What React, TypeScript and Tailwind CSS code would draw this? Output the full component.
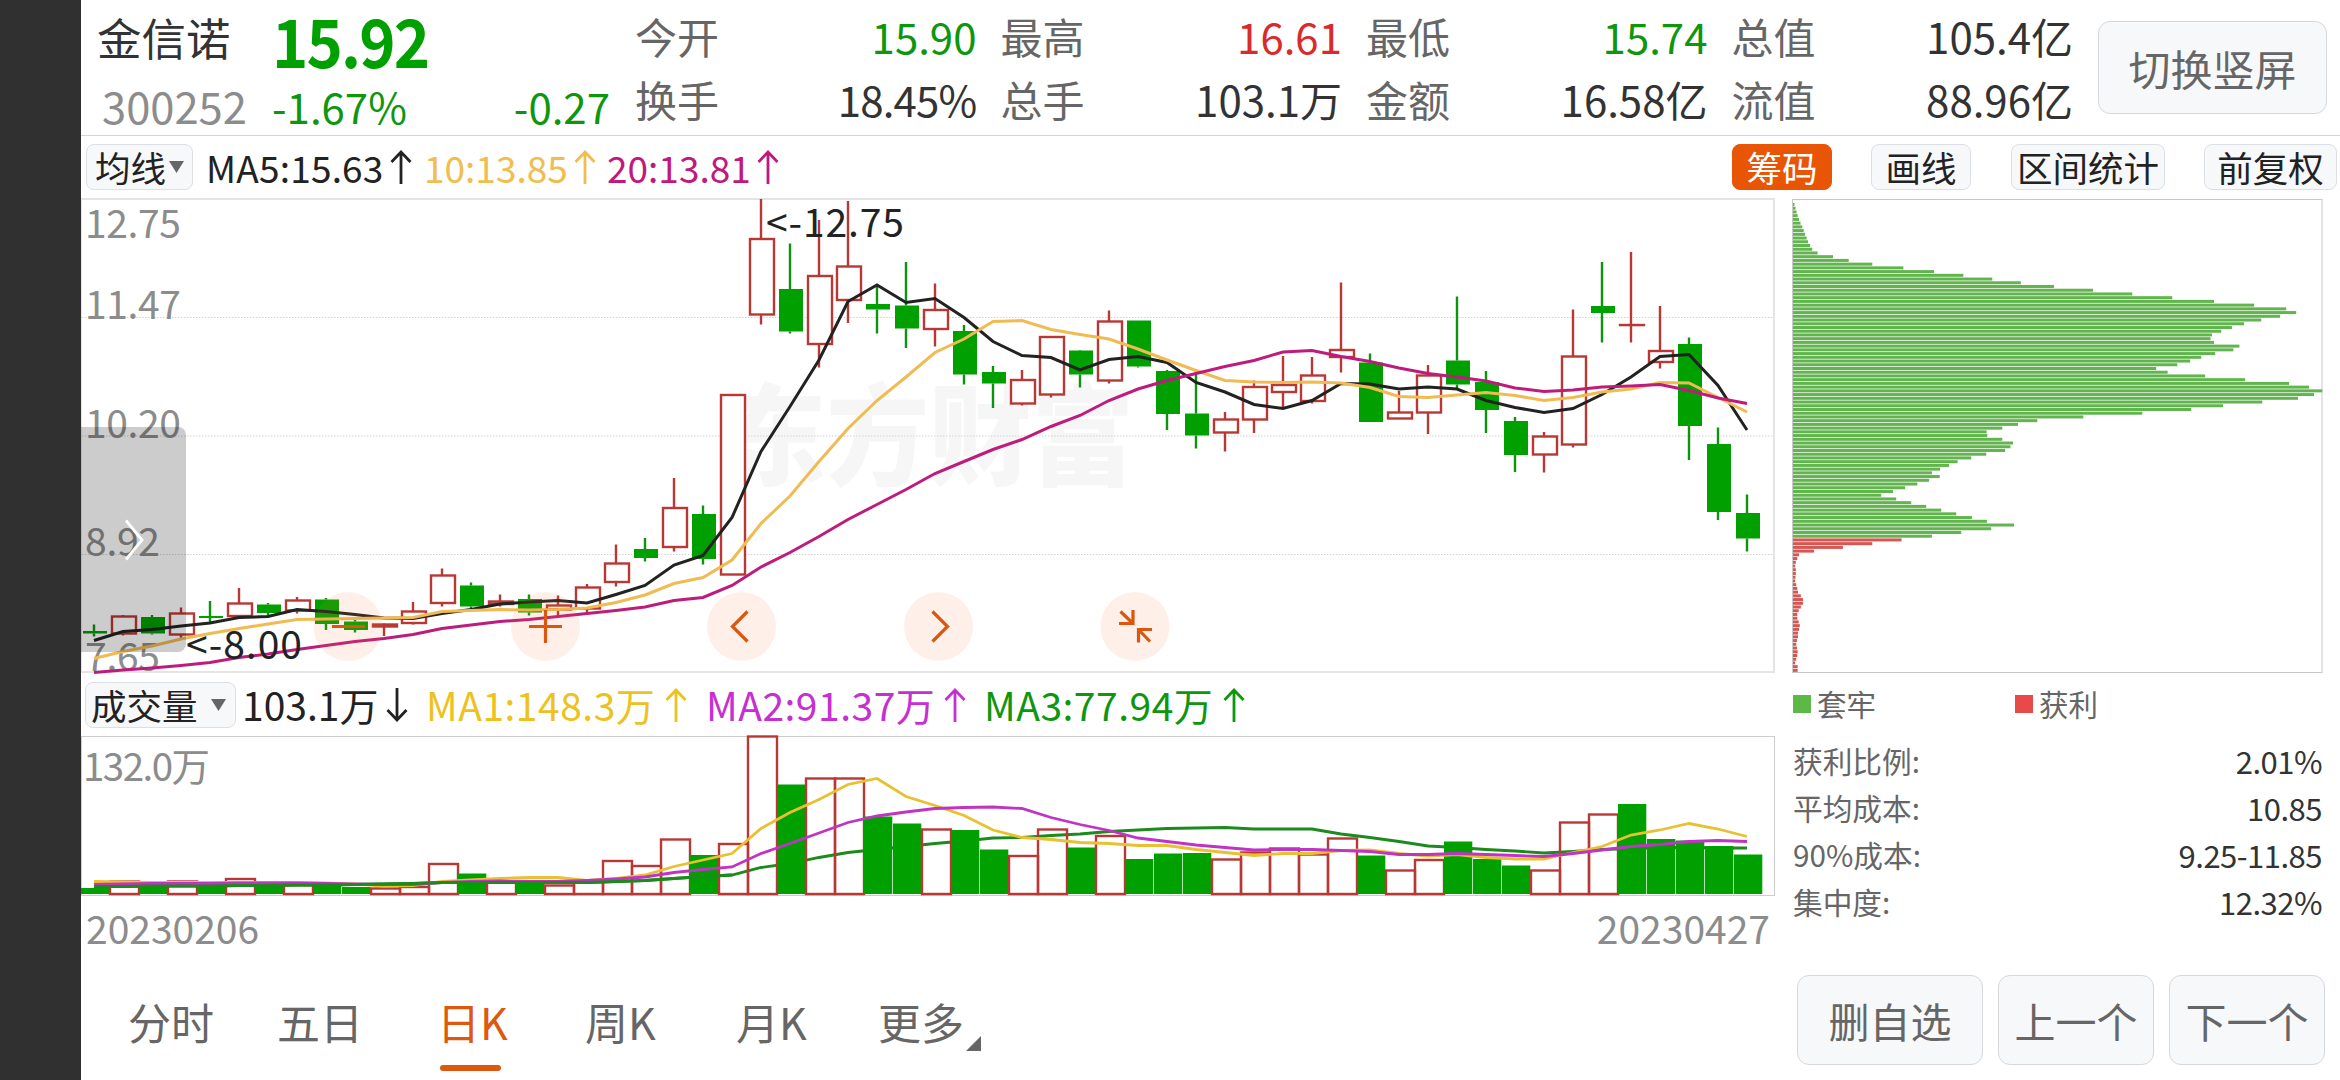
import type { ReactNode } from "react";
import clsx from "clsx";

const RED = "#b83835";
const GREEN = "#00a000";

/** [direction, high, body top, body bottom, low, volume top] */
type Candle = ["r" | "g", number, number, number, number, number];

const candles: Candle[] = [
  ["g", 624.5, 631, 633.5, 636.5, 888],
  ["r", 615, 616.5, 633.5, 635.5, 881.5],
  ["g", 615, 617, 633.5, 634.5, 885.5],
  ["r", 607.5, 613.5, 634.5, 638, 881.5],
  ["g", 601, 616, 618, 622.5, 886],
  ["r", 588, 603.5, 616, 617, 879],
  ["g", 603, 604.5, 613, 615.5, 884.5],
  ["r", 597, 600.5, 610.5, 613.5, 885],
  ["g", 598, 599.5, 624, 630, 885],
  ["g", 620, 621.5, 630, 632.5, 887],
  ["r", 623.5, 624.5, 626.5, 636, 888.5],
  ["r", 602, 611.5, 623, 624.5, 887],
  ["r", 568.5, 575.5, 603, 606.5, 864],
  ["g", 582.5, 585.5, 606.5, 609.5, 873.5],
  ["r", 594.5, 601.5, 604, 606.5, 882.5],
  ["g", 594.5, 599, 612.5, 615.5, 884],
  ["r", 595.5, 605.5, 609.5, 615.5, 885.5],
  ["r", 584, 587.5, 608.5, 612.5, 881],
  ["r", 544.5, 563.5, 582, 586.5, 861],
  ["g", 538, 549, 558, 561.5, 866],
  ["r", 478, 508, 547, 551.5, 839.5],
  ["g", 505.5, 514, 559, 564.5, 855],
  ["r", 395, 395, 574.5, 574.5, 844],
  ["r", 199, 239, 314.5, 324.5, 736.5],
  ["g", 243.5, 289, 331.5, 333.5, 784.5],
  ["r", 220, 276, 344, 367.5, 778.5],
  ["r", 201, 266.5, 300, 323, 778.5],
  ["g", 285, 304, 309.5, 333.5, 816.5],
  ["g", 262, 305.5, 328.5, 348, 823.5],
  ["r", 283.5, 310, 329, 346.5, 829.5],
  ["g", 325, 331, 374.5, 384.5, 830],
  ["g", 366, 372, 383.5, 408, 849.5],
  ["r", 370, 380, 403.5, 405.5, 856],
  ["r", 336, 337, 394.5, 397.5, 829.5],
  ["g", 350, 350.5, 374.5, 387.5, 847.5],
  ["r", 310.5, 321.5, 380.5, 383.5, 836],
  ["g", 320.5, 320.5, 366.5, 367.5, 859],
  ["g", 370, 371, 414, 430, 853.5],
  ["g", 371.5, 413.5, 435.5, 448.5, 853],
  ["r", 412, 419.5, 432.5, 451.5, 859.5],
  ["r", 380.5, 387, 419.5, 433, 852.5],
  ["r", 356, 385, 392, 408.5, 848.5],
  ["r", 357, 375.5, 401, 403.5, 854.5],
  ["r", 282.5, 350, 357, 372.5, 838.5],
  ["g", 353.5, 362.5, 422, 422, 855.5],
  ["r", 391, 412.5, 418.5, 418.5, 870.5],
  ["r", 365, 375.5, 412.5, 434, 860],
  ["g", 296.5, 360.5, 384.5, 388.5, 841.5],
  ["g", 371, 382, 410, 433, 859],
  ["g", 417, 421, 455, 472, 865.5],
  ["r", 432, 436.5, 454.5, 472.5, 870.5],
  ["r", 309.5, 356.5, 444.5, 447.5, 822.5],
  ["g", 262, 306, 313, 342.5, 814.5],
  ["r", 252, 325, 325, 342.5, 804],
  ["r", 306, 351, 362, 368.5, 839],
  ["g", 337.5, 344, 426, 460, 840.5],
  ["g", 427.5, 444, 512, 520, 846],
  ["g", 494.5, 513, 538.5, 551.5, 854.5],
];

// volume bars whose colour differs from the candle above them
const volumeColor: Record<number, "r" | "g"> = { 19: "r", 52: "r", 53: "g", 54: "g" };

const ma5 = [
  640.5, 631.5, 629.5, 626, 623, 617.5, 616.5, 609.5, 611.5, 614.5, 618, 618.5, 613.5, 609.5, 604,
  602, 600.5, 603, 594.5, 585.5, 565, 555.5, 517.5, 451.5, 406.5, 360, 301.5, 285, 302.5, 298.5,
  317.5, 341.5, 355.5, 357.5, 370, 359.5, 356.5, 362.5, 382.5, 392, 404.5, 408.5, 400.5, 383.5,
  384, 389, 387, 389, 400.5, 407.5, 412.5, 408.5, 394.5, 377, 356.5, 354.5, 385.5, 430,
];
const ma10 = [
  658.5, 651.5, 646, 639, 633.5, 628.5, 624, 619.5, 619, 618.5, 618, 617.5, 611.5, 610.5, 609.5,
  610, 609.5, 608, 602.5, 595, 583.5, 577.5, 560, 523.5, 496, 461.5, 428.5, 400.5, 377, 352.5, 339,
  321.5, 320.5, 329.5, 334.5, 339, 349, 360, 370.5, 380.5, 382, 382.5, 382, 383, 387.5, 396.5,
  397.5, 395, 392.5, 395.5, 400.5, 397.5, 392, 389, 382.5, 383, 397.5, 412,
];
const ma20 = [
  672.5, 670, 668, 665.5, 662.5, 657.5, 654, 649.5, 645.5, 641.5, 638.5, 634.5, 628.5, 625, 621.5,
  619.5, 616.5, 613.5, 610.5, 607, 600.5, 597.5, 585.5, 567, 552.5, 536.5, 519.5, 504.5, 489.5,
  473.5, 461.5, 449.5, 439.5, 426.5, 415.5, 400.5, 389, 380.5, 373.5, 366.5, 360.5, 352, 350.5,
  356.5, 361.5, 368, 373.5, 377, 381, 388, 391.5, 390, 387, 386, 384.5, 390.5, 398, 403.5,
];
const vol1 = [
  881.5, 882, 882.5, 882.5, 882.5, 882.5, 882.5, 882.5, 883, 884, 886, 885.5, 881.5, 880, 878.5,
  877.5, 877.5, 880.5, 878.5, 875, 866.5, 860, 853.5, 828.5, 812.5, 799.5, 784.5, 778.5, 796.5,
  805.5, 815.5, 830, 837.5, 839.5, 842.5, 843.5, 845.5, 845.5, 849.5, 852.5, 855.5, 853.5, 853.5,
  850.5, 850, 853.5, 856, 854.5, 857.5, 859, 859, 852.5, 846.5, 835, 830, 823.5, 829, 836.5,
];
const vol2 = [
  884.5, 884, 883.5, 883.5, 883.5, 883, 883, 883, 883.5, 884, 884.5, 884.5, 882.5, 881.5, 881,
  881.5, 881.5, 880.5, 879, 877, 872.5, 869.5, 867, 853.5, 843.5, 833, 822.5, 816, 812, 808.5,
  807.5, 807, 808.5, 817.5, 824.5, 830.5, 838, 841.5, 845, 847.5, 850, 849.5, 849.5, 850.5, 851.5,
  854.5, 854.5, 853.5, 854.5, 855.5, 856.5, 853.5, 850, 846.5, 844.5, 841.5, 840.5, 841.5,
];
const vol3 = [
  886.5, 886.5, 886, 886, 886, 885.5, 885.5, 885, 885, 884.5, 884, 883.5, 882.5, 882.5, 882.5,
  882.5, 882.5, 882.5, 881.5, 880.5, 878.5, 876.5, 875, 867.5, 863.5, 857.5, 852.5, 849.5, 846.5,
  843.5, 841, 838, 837.5, 835.5, 834, 831.5, 830, 828.5, 828, 827.5, 829, 829, 829, 834, 837.5,
  841.5, 846, 847.5, 849.5, 851, 853, 851.5, 849.5, 848.5, 847.5, 847.5, 848, 848,
];

// cost distribution, one width per price level from high to low
const chips = [
  4, 7, 10, 13, 17, 21, 26, 30, 34, 38, 42, 48, 54, 69, 112, 156, 222, 309, 395, 477, 558, 638, 731,
  840, 950, 1062, 1179, 1291, 1381, 1409, 1364, 1311, 1263, 1229, 1199, 1173, 1169, 1179, 1250,
  1233, 1182, 1143, 1112, 1076, 1017, 1049, 1154, 1266, 1389, 1445, 1482, 1459, 1414, 1314, 1204,
  1115, 978, 813, 684, 630, 586, 542, 544, 586, 616, 609, 594, 541, 499, 461, 437, 412, 389, 411,
  381, 348, 314, 280, 247, 289, 331, 373, 415, 457, 501, 543, 619, 555, 471, 389, 304, 222, 140,
  59, 17, 12, 8, 6, 8, 8, 7, 6, 9, 12, 14, 22, 28, 28, 22, 16, 12, 12, 16, 19, 17, 14, 14, 11, 9,
  11, 13, 12, 9, 6, 13, 13,
];
const PROFIT_FROM = 90;

const xAt = (i: number) => 94 + 29 * i;
const toPoints = (ys: number[]) => ys.map((y, i) => `${xAt(i)},${y}`).join(" ");

function Line({ ys, color, width = 3 }: { ys: number[]; color: string; width?: number }) {
  return <polyline points={toPoints(ys)} fill="none" stroke={color} strokeWidth={width} />;
}

function Arrow({ down }: { down?: boolean }) {
  return (
    <svg
      viewBox="0 0 22 34"
      className={clsx("h-[34px] w-[22px] shrink-0", down && "rotate-180")}
      fill="none"
      stroke="currentColor"
      strokeWidth="2.8"
    >
      <path d="M11 34V2M1.5 12L11 2L20.5 12" />
    </svg>
  );
}

function Caret() {
  return (
    <svg viewBox="0 0 15 12" className="h-3 w-[15px] shrink-0" fill="#666">
      <path d="M0 0H15L7.5 12Z" />
    </svg>
  );
}

const stats = [
  [
    { label: "今开", value: "15.90", tone: "text-[#0f960f]" },
    { label: "换手", value: "18.45%", tone: "tracking-[-0.8px] text-[#333]" },
  ],
  [
    { label: "最高", value: "16.61", tone: "text-[#d92b2b]" },
    { label: "总手", value: "103.1万", tone: "text-[#333]" },
  ],
  [
    { label: "最低", value: "15.74", tone: "text-[#0f960f]" },
    { label: "金额", value: "16.58亿", tone: "text-[#333]" },
  ],
  [
    { label: "总值", value: "105.4亿", tone: "text-[#333]" },
    { label: "流值", value: "88.96亿", tone: "text-[#333]" },
  ],
];

function Header() {
  return (
    <header className="flex h-[136px] border-b border-[#d5d5d5]">
      <div className="w-[191px] pt-[15px] pl-4 leading-none">
        <div className="text-[44.5px] text-[#333]">金信诺</div>
        <div className="mt-[24px] pl-[5px] text-[43.5px] text-[#8c8c8c]">300252</div>
      </div>
      <div className="w-[338px] text-[#0f960f]">
        <div className="h-[84px] w-[170px] origin-left scale-x-[0.92] text-[67px] leading-[78px] font-bold tracking-[-2px] text-[#00a000]">
          15.92
        </div>
        <div className="flex justify-between text-[42px] leading-[44px]">
          <span>-1.67%</span>
          <span>-0.27</span>
        </div>
      </div>
      <div className="flex gap-[24px] pt-[15px] pl-[25px]">
        {stats.map((col) => (
          <div key={col[0].label} className="flex w-[341.5px] flex-col gap-[21px] leading-none">
            {col.map((s) => (
              <div key={s.label} className="flex justify-between text-[42px]">
                <span className="text-[#666]">{s.label}</span>
                <span className={s.tone}>{s.value}</span>
              </div>
            ))}
          </div>
        ))}
      </div>
      <button className="mt-[21px] ml-[25px] h-[93px] w-[229px] rounded-xl border border-[#d5d8dc] bg-[#f7f8fa] text-[42px] leading-none text-[#666]">
        切换竖屏
      </button>
    </header>
  );
}

function Tool({ children, className }: { children: ReactNode; className?: string }) {
  return (
    <button
      className={clsx(
        "h-[46px] shrink-0 rounded-lg border text-[35.5px] leading-none",
        className ?? "border-[#dcdfe3] bg-[#f7f8fa] text-[#222]",
      )}
    >
      {children}
    </button>
  );
}

function AverageBar() {
  return (
    <div className="flex h-[62px] items-center pl-[5px] text-[37px] leading-none">
      <div className="flex h-[46px] w-[107px] items-center gap-[3px] rounded-lg border border-[#dcdfe3] bg-[#f7f8fa] pl-2 text-[35.5px] text-[#222]">
        均线
        <Caret />
      </div>
      <div className="flex w-[219px] items-center justify-between pl-[13px] tracking-[0.2px] text-[#222]">
        MA5:15.63 <Arrow />
      </div>
      <div className="flex w-[184px] items-center justify-between pl-[12px] text-[#f0bd50]">
        10:13.85 <Arrow />
      </div>
      <div className="flex w-[183px] items-center justify-between pl-[11px] text-[#c0187c]">
        20:13.81 <Arrow />
      </div>
      <div className="ml-auto flex pr-[3px]">
        <Tool className="mr-[39px] w-[100px] border-[#e85505] bg-[#e85505] text-white">筹码</Tool>
        <div className="mr-10 flex w-[100px] flex-col">
          <Tool>画线</Tool>
        </div>
        <div className="mr-[39px] flex w-[154px] flex-col">
          <Tool>区间统计</Tool>
        </div>
        <div className="flex w-[133px] flex-col">
          <Tool>前复权</Tool>
        </div>
      </div>
    </div>
  );
}

function RoundButton({ cx, children }: { cx: number; children: ReactNode }) {
  return (
    <g transform={`translate(${cx} 626.5)`} fill="none" stroke="#d9570f" strokeWidth="3.2">
      <circle r="34.5" fill="#f5762a" fillOpacity="0.11" stroke="none" />
      {children}
    </g>
  );
}

const axis = [
  { y: 238, label: "12.75", w: 96 },
  { y: 319, label: "11.47", w: 96 },
  { y: 437.5, label: "10.20", w: 96 },
  { y: 556, label: "8.92", w: 75 },
  { y: 670.5, label: "7.65", w: 75 },
];

function PriceChart() {
  return (
    <svg viewBox="81 198 1695 476" className="h-[476px] w-[1695px]">
      <text
        x="724"
        y="477"
        fontSize="110"
        fontWeight="900"
        fill="#f6f6f6"
        textLength="410"
        lengthAdjust="spacingAndGlyphs"
      >
        东方财富
      </text>
      <rect x="81" y="199" width="1693" height="473" fill="none" stroke="#e4e4e4" strokeWidth="2" />
      {[317.5, 436, 554.5].map((y) => (
        <line key={y} x1="82" x2="1774" y1={y} y2={y} stroke="#d2d2d2" strokeDasharray="1.5 1.5" />
      ))}
      {axis.map((a) => (
        <text key={a.label} x="85" y={a.y} fontSize="39" fill="#8c8c8c" textLength={a.w}>
          {a.label}
        </text>
      ))}
      {candles.map(([dir, high, top, bottom, low], i) => {
        const x = xAt(i);
        const color = dir === "r" ? RED : "#0d930d";
        return (
          <g key={i} stroke={color} strokeWidth="2.4">
            <path d={`M${x} ${high}V${top}M${x} ${bottom}V${low}`} />
            {dir === "r" ? (
              <rect x={x - 11} y={top} width="24" height={Math.max(bottom - top, 0.1)} fill="#fff" />
            ) : (
              <rect x={x - 11} y={top} width="24" height={bottom - top} fill={GREEN} stroke="none" />
            )}
          </g>
        );
      })}
      <Line ys={ma5} color="#222" />
      <Line ys={ma10} color="#efbb52" />
      <Line ys={ma20} color="#bd1c7c" />
      <g fontSize="39" fill="#222">
        <text x="766" y="236.5" textLength="138">
          &lt;-12.75
        </text>
        <text x="186" y="659" textLength="116">
          &lt;-8.00
        </text>
      </g>
      <RoundButton cx={348}>
        <path d="M-16 0H17" />
      </RoundButton>
      <RoundButton cx={545.5}>
        <path d="M-16.5 0H16.5M0-16.5V16.5" />
      </RoundButton>
      <RoundButton cx={741.5}>
        <path d="M6-15L-9 0L6 15" />
      </RoundButton>
      <RoundButton cx={938.5}>
        <path d="M-6-15L9 0L-6 15" />
      </RoundButton>
      <RoundButton cx={1135}>
        <path d="M-14.5-15L-2-3M-2-16.5V-3H-16M15 15L3.5 3M3.5 16V3H17" />
      </RoundButton>
      <path d="M81 427H178a8 8 0 0 1 8 8V644a8 8 0 0 1-8 8H81Z" fill="#000" fillOpacity="0.2" />
      <path d="M126 520.5L142 540L126 559.5" fill="none" stroke="#fff" strokeWidth="2.8" />
    </svg>
  );
}

function VolumeBar() {
  return (
    <div className="flex h-[61px] items-center pl-[4px] text-[39px] leading-none">
      <div className="flex h-[46px] w-[151px] items-center gap-[13px] rounded-lg border border-[#dcdfe3] bg-[#f7f8fa] pl-[5px] text-[35.5px] text-[#222]">
        成交量
        <Caret />
      </div>
      <div className="flex w-[172px] items-center justify-between pl-1.5 text-[#222]">
        103.1万 <Arrow down />
      </div>
      <div className="flex w-[279px] items-center justify-between pl-[18px] tracking-[0.5px] text-[#ecc21f]">
        MA1:148.3万 <Arrow />
      </div>
      <div className="flex w-[279px] items-center justify-between pl-[19px] tracking-[0.5px] text-[#c62fd0]">
        MA2:91.37万 <Arrow />
      </div>
      <div className="flex w-[279px] items-center justify-between pl-[18px] tracking-[0.5px] text-[#0f960f]">
        MA3:77.94万 <Arrow />
      </div>
    </div>
  );
}

function VolumeChart() {
  return (
    <svg viewBox="81 735 1695 162" className="h-[162px] w-[1695px]">
      <rect x="81.5" y="736.5" width="1693" height="159" fill="none" stroke="#ccc" />
      <text x="83" y="781" fontSize="38.5" fill="#8c8c8c" textLength="127">
        132.0万
      </text>
      <Line ys={vol3} color="#1c8a1c" width={2.8} />
      {candles.map((c, i) => {
        const dir = volumeColor[i] ?? c[0];
        const top = c[5];
        return dir === "r" ? (
          <rect
            key={i}
            x={xAt(i) - 13}
            y={top}
            width="29"
            height={894 - top}
            fill="none"
            stroke={RED}
            strokeWidth="2.4"
          />
        ) : (
          <rect key={i} x={xAt(i) - 13} y={top} width="28.3" height={894 - top} fill={GREEN} />
        );
      })}
      <Line ys={vol1} color="#e8c030" width={2.8} />
      <Line ys={vol2} color="#c034c4" width={2.8} />
      <Line ys={vol3.slice(0, 23)} color="#1c8a1c" width={2.8} />
    </svg>
  );
}

function ChipChart() {
  return (
    <svg viewBox="1791 198 533 476" className="h-[476px] w-[533px]">
      <rect x="1792.5" y="199.5" width="529.5" height="473" fill="none" stroke="#c9c9c9" />
      {chips.map((w, i) => (
        <rect
          key={i}
          x="1793"
          y={203 + i * 3.727}
          width={w / 2.8}
          height="3"
          fill={i < PROFIT_FROM ? "#62b44e" : "#d85552"}
        />
      ))}
    </svg>
  );
}

const costRows = [
  ["获利比例:", "2.01%"],
  ["平均成本:", "10.85"],
  ["90%成本:", "9.25-11.85"],
  ["集中度:", "12.32%"],
];

function ChipPanel() {
  return (
    <div className="ml-[15px] w-[533px]">
      <ChipChart />
      <div className="flex h-[60px] items-center pl-0.5 text-[29.5px] leading-none text-[#666]">
        <i className="mr-1.5 size-[18px] bg-[#5db947]" />
        <span className="w-[198px]">套牢</span>
        <i className="mr-1.5 size-[18px] bg-[#e84a4a]" />
        <span>获利</span>
      </div>
      <dl className="pt-[3px] pr-0.5 pl-0.5 leading-none">
        {costRows.map(([label, value]) => (
          <div key={label} className="flex h-[47px] items-center justify-between">
            <dt className="text-[29.7px] text-[#666]">{label}</dt>
            <dd className="text-[31px] tracking-[-0.5px] text-[#333]">{value}</dd>
          </div>
        ))}
      </dl>
    </div>
  );
}

const tabs = [
  { label: "分时", width: "w-[149px]" },
  { label: "五日", width: "w-[160px]" },
  { label: "日K", width: "w-[148px]", active: true },
  { label: "周K", width: "w-[151px]" },
  { label: "月K", width: "w-[142px]" },
  { label: "更多", width: "w-[88px]" },
];

function Footer() {
  return (
    <footer className="flex h-[120px] pl-[47px] text-[43px] leading-none text-[#666]">
      {tabs.map((t) => (
        <div key={t.label} className={clsx("flex flex-col pt-[40px]", t.width)}>
          <span className={clsx(t.active && "text-[#dc5a10]")}>{t.label}</span>
          {t.active && <i className="mt-[22px] ml-[3px] h-1.5 w-[61px] rounded-full bg-[#dc5a10]" />}
        </div>
      ))}
      <svg viewBox="0 0 15 15" className="mt-[76px] size-[15px]" fill="#666">
        <path d="M15 0V15H0Z" />
      </svg>
      <div className="ml-auto flex gap-[15px] pt-[15px] pr-[15px] text-[41px]">
        {["删自选", "上一个", "下一个"].map((b, i) => (
          <button
            key={b}
            className={clsx(
              "h-[90px] rounded-xl border border-[#d5d8dc] bg-[#f7f8fa]",
              i === 0 ? "w-[186px]" : "w-[156px]",
            )}
          >
            {b}
          </button>
        ))}
      </div>
    </footer>
  );
}

export default function App() {
  return (
    <div className="flex h-[1080px] w-[2340px] overflow-hidden bg-white font-['Noto_Sans_CJK_SC',sans-serif] whitespace-nowrap">
      <aside className="w-[81px] shrink-0 bg-[#303030]" />
      <main className="flex flex-1 flex-col">
        <Header />
        <AverageBar />
        <div className="flex h-[762px]">
          <div className="w-[1695px]">
            <PriceChart />
            <VolumeBar />
            <VolumeChart />
            <div className="flex justify-between pt-[11px] pr-[6px] pl-[5px] text-[39px] leading-none text-[#8c8c8c]">
              <span>20230206</span>
              <span>20230427</span>
            </div>
          </div>
          <ChipPanel />
        </div>
        <Footer />
      </main>
    </div>
  );
}
